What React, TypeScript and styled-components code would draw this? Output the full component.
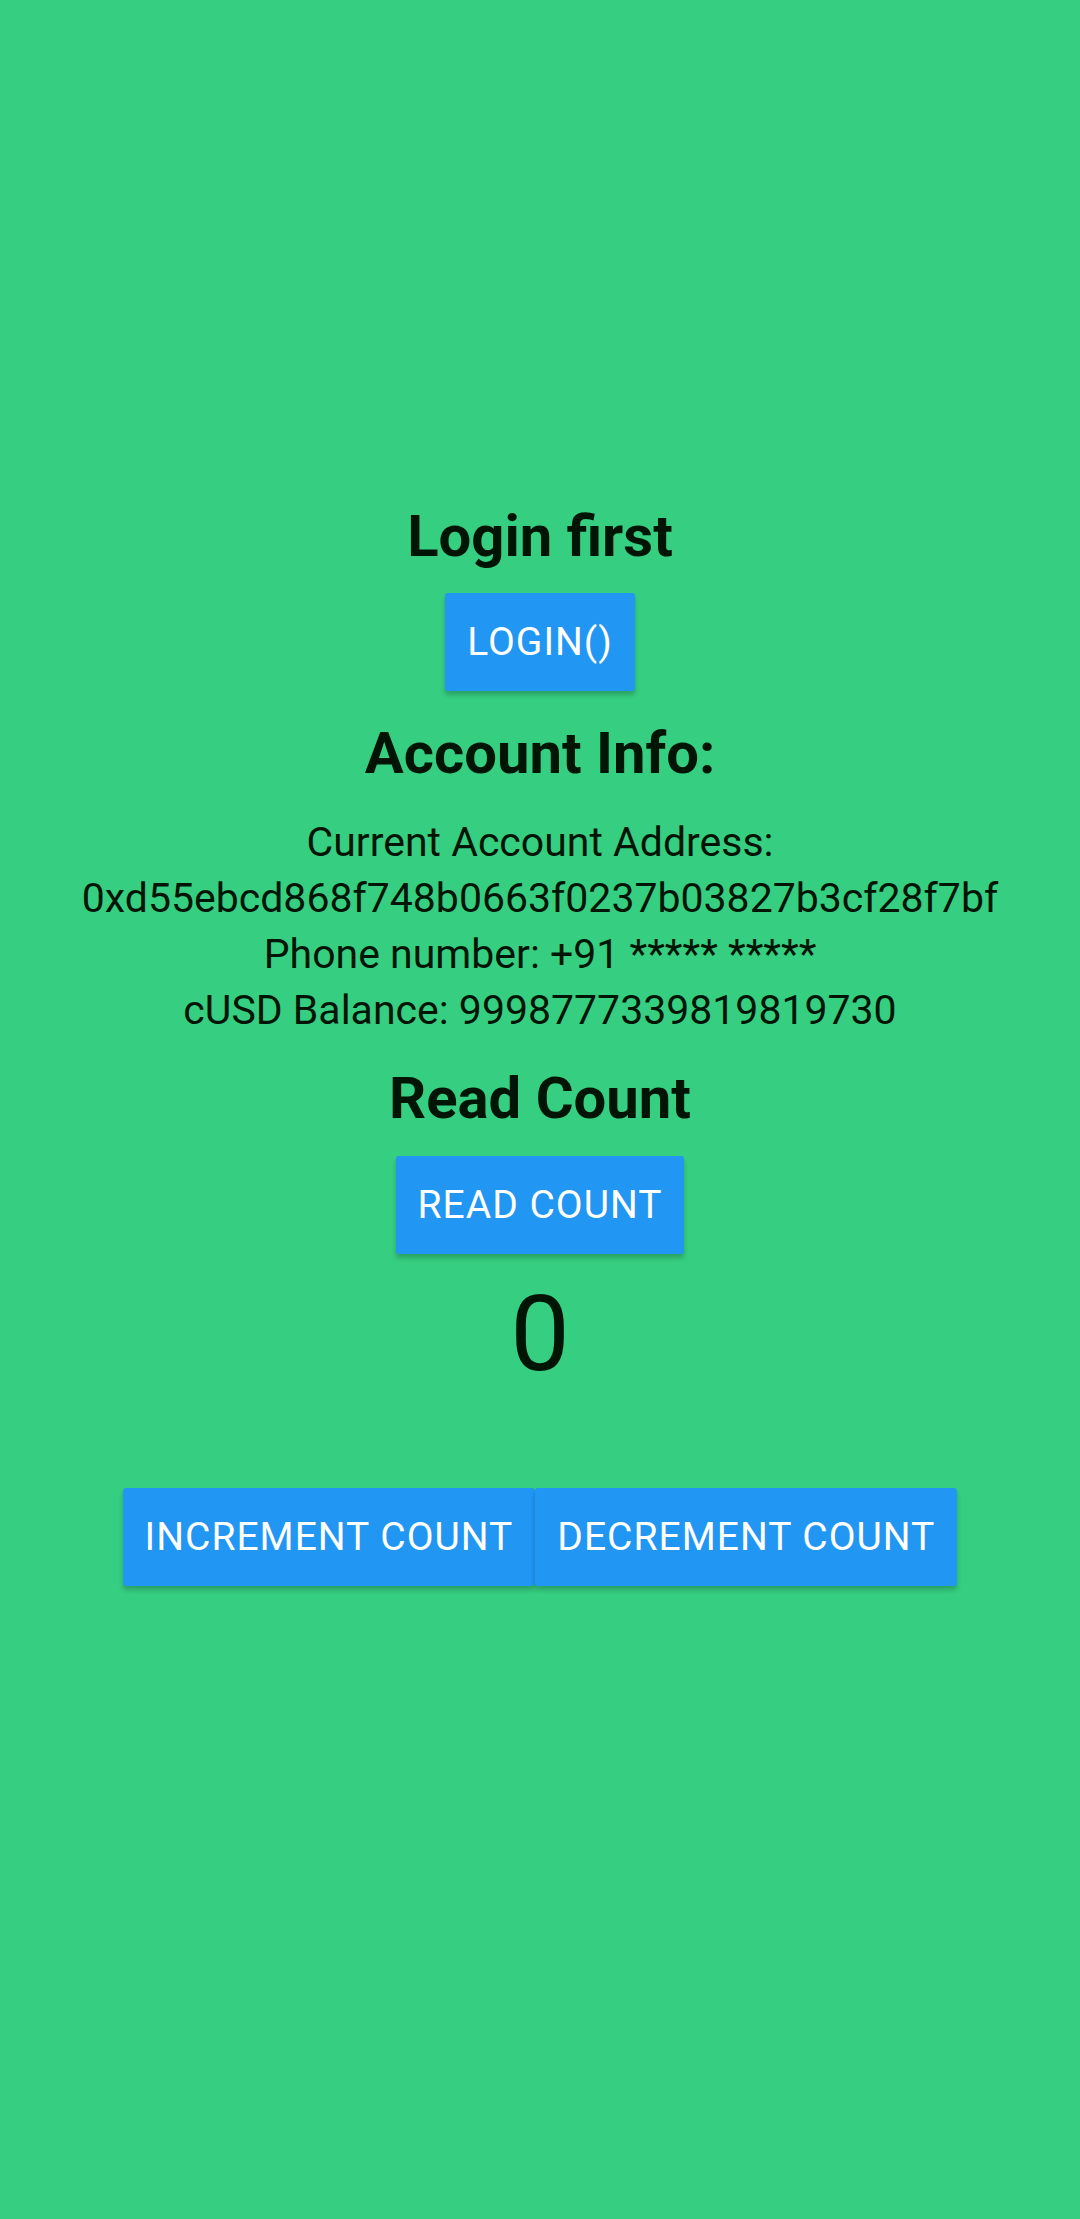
import { useState } from 'react';
import styled, { createGlobalStyle } from 'styled-components';

const GlobalStyle = createGlobalStyle`
  html, body {
    margin: 0;
    padding: 0;
    background-color: #36cf81;
  }
  body {
    font-family: Roboto, "Noto Sans", "Liberation Sans", sans-serif;
    color: #001505;
  }
`;

const Screen = styled.main`
  min-height: 2219px;
  box-sizing: border-box;
  padding-top: 502px;
  display: flex;
  flex-direction: column;
  align-items: center;
  background-color: #36cf81;
`;

const Heading = styled.h2<{ $gapTop?: number }>`
  margin: ${(props) => props.$gapTop ?? 0}px 0 0;
  font-size: 58px;
  line-height: 68px;
  font-weight: 700;
  text-align: center;
`;

const ActionButton = styled.button<{ $gapTop?: number }>`
  margin-top: ${(props) => props.$gapTop ?? 0}px;
  height: 98px;
  padding: 0 22px;
  border: none;
  border-radius: 3px;
  background-color: #2196f3;
  color: #ffffff;
  font-family: Roboto, "Noto Sans", sans-serif;
  font-size: 39px;
  letter-spacing: 1px;
  text-transform: uppercase;
  box-shadow: 0 4px 5px rgba(0, 0, 0, 0.22);
  cursor: pointer;
`;

const InfoBlock = styled.div`
  margin-top: 27px;
  display: flex;
  flex-direction: column;
  align-items: center;
`;

const InfoLine = styled.p`
  margin: 0;
  font-size: 41px;
  line-height: 56px;
  text-align: center;
`;

const CountValue = styled.div`
  margin-top: 18px;
  font-size: 106px;
  line-height: 124px;
`;

const ButtonRow = styled.div`
  margin-top: 92px;
  display: flex;
  flex-direction: row;
`;

const App = function() {
  const [count, setCount] = useState(0);
  const [shown, setShown] = useState(0);

  return (
    <>
      <GlobalStyle />
      <Screen>
        <Heading>Login first</Heading>
        <ActionButton $gapTop={23}>Login()</ActionButton>
        <Heading $gapTop={28}>Account Info:</Heading>
        <InfoBlock>
          <InfoLine>Current Account Address:</InfoLine>
          <InfoLine>0xd55ebcd868f748b0663f0237b03827b3cf28f7bf</InfoLine>
          <InfoLine>Phone number: +91 ***** *****</InfoLine>
          <InfoLine>cUSD Balance: 9998777339819819730</InfoLine>
        </InfoBlock>
        <Heading $gapTop={26}>Read Count</Heading>
        <ActionButton $gapTop={24} onClick={() => setShown(count)}>Read Count</ActionButton>
        <CountValue>{shown}</CountValue>
        <ButtonRow>
          <ActionButton onClick={() => setCount(count + 1)}>Increment Count</ActionButton>
          <ActionButton onClick={() => setCount(count - 1)}>Decrement Count</ActionButton>
        </ButtonRow>
      </Screen>
    </>
  );
};

export default App;
